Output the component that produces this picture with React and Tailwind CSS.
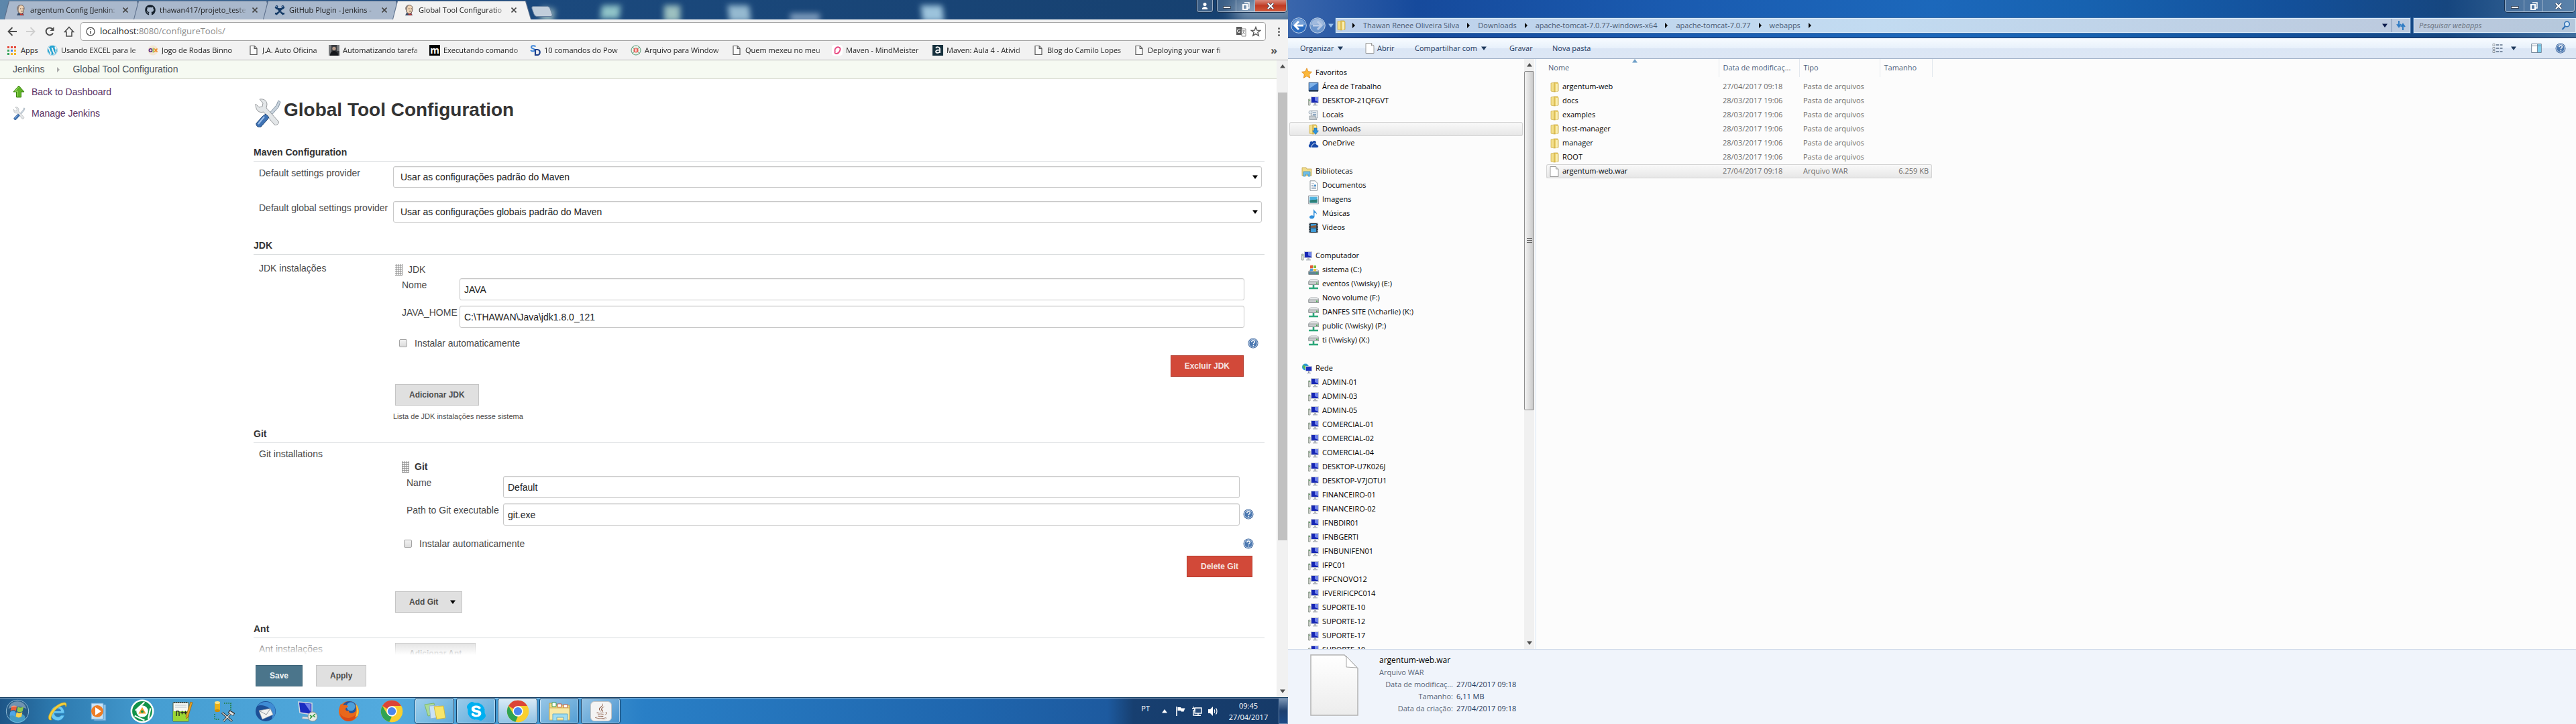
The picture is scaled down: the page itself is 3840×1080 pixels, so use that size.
import { FaGithub, FaWordpress, FaSkype, FaJava } from "react-icons/fa";

/* ---------- small icons ---------- */

const Svg = ({ box = "0 0 16 16", className = "size-4", children }) => (
  <svg viewBox={box} className={"shrink-0 " + className} aria-hidden="true">{children}</svg>
);

const Butler = () => (
  <Svg>
    <path d="M3 7C2 3 5 .6 8 .6c3.600 0 5.500 2.600 4.800 6.200L12 11l-3 3-4-2z" fill="#efd3b5" stroke="#4b3a32" strokeWidth=".8" />
    <path d="M3 7C2 3 5 .6 8 .6 5.500 2 5 4 4.600 8l.4 4c-2-1-2-3-2-5z" fill="#8d8480" />
    <path d="M7 6h1.500M10.500 6H12M8 9.500h3" stroke="#3a2b26" strokeWidth=".9" />
    <path d="M4 12l4 2 3-2 2 4H2z" fill="#394a66" />
    <path d="M7 13l2 1 2.500-1v3L9 15l-2 1z" fill="#c8322c" />
  </Svg>
);

const TwoCats = () => (
  <Svg>
    <circle cx="3.500" cy="3" r="2" fill="#143a66" />
    <circle cx="12.500" cy="3" r="2" fill="#143a66" />
    <path d="M1.500 3.500C4 7.500 12 7.500 14.500 3.500M4 5l6 6.500c1 1.500 3 2 5 1.500M12 5l-6 6.500c-1 1.500-3 2-5 1.500" fill="none" stroke="#143a66" strokeWidth="2.400" />
    <path d="M3 15l2-3M13 15l-2-3" stroke="#143a66" strokeWidth="2" />
    <circle cx="3.500" cy="2.800" r=".8" fill="#8fb4e0" />
    <circle cx="12.500" cy="2.800" r=".8" fill="#8fb4e0" />
  </Svg>
);

const Page = ({ className = "h-4 w-3" }) => (
  <Svg box="0 0 12 16" className={className}>
    <path d="M1 1.500h6.500l3.500 3.700v9.300H1z" fill="#fafafa" stroke="#5a5a5a" strokeWidth="1.200" />
    <path d="M7.200 1.500v4H11" fill="none" stroke="#5a5a5a" strokeWidth="1.200" />
  </Svg>
);

const Tools = ({ className }) => (
  <Svg box="0 0 44 44" className={className}>
    <path d="M39 4l3 2-3 8-14 16-3-3 14-16z" fill="#c9d3dd" stroke="#8494a3" />
    <path d="M5 9l5 5 5-1 1-5-5-6c6-1 11 2 11 8l-1 5 18 20c2 3-3 7-6 5L17 21c-7 2-12-2-12-12z" fill="#e3e6e8" stroke="#96999c" />
    <path d="M20 24l5 5-3 4-9 10c-3 2-8-1-7-5l9-10z" fill="#3f73b5" stroke="#1f4576" />
    <path d="M18 28L9 39" stroke="#9fc0ea" strokeWidth="2" />
  </Svg>
);

const GreenArrow = () => (
  <Svg box="0 0 20 20" className="size-5">
    <path d="M10 1l8 9h-4.500v8h-7v-8H2z" fill="#5fb327" stroke="#3b8211" />
    <path d="M9.500 3L4.500 9H8v8" fill="none" stroke="#a5e06d" />
  </Svg>
);

const Help = () => (
  <button aria-label="Help" className="size-4">
    <Svg>
      <circle cx="8" cy="8" r="7.500" fill="#2d5a97" />
      <circle cx="8" cy="8" r="6.200" fill="#4a77b0" stroke="#dfe9f5" />
      <path d="M5.800 6.200c0-3 4.600-3 4.600-.3 0 1.600-2 1.600-2 3.300M8.400 10.800v1.500" fill="none" stroke="#fff" strokeWidth="1.500" />
    </Svg>
  </button>
);

const Grip = () => (
  <span className="h-[17px] w-[11px] shrink-0 bg-[radial-gradient(#8a8a8a_50%,transparent_60%)] bg-[size:3px_3px]" />
);

const Down = ({ className = "text-black" }) => (
  <Svg box="0 0 8 6" className={"h-1.5 w-2 " + className}><path d="M0 .5h8L4 6z" fill="currentColor" /></Svg>
);
const Up = ({ className = "text-[#505050]" }) => (
  <Svg box="0 0 8 6" className={"h-1.5 w-2 " + className}><path d="M0 5.500h8L4 0z" fill="currentColor" /></Svg>
);
const Right = ({ className = "h-2 w-1 text-black" }) => (
  <Svg box="0 0 4 8" className={className}><path d="M0 0v8l4-4z" fill="currentColor" /></Svg>
);

const Chrome = ({ className = "size-9" }) => (
  <Svg box="0 0 40 40" className={className}>
    <circle cx="20" cy="20" r="18" fill="#f7cf2c" />
    <path d="M20 20L4.400 11A18 18 0 0 1 35.600 11H20z" fill="#dc4437" />
    <path d="M4.400 11l8 13.500 7.600 4L16 37.500A18 18 0 0 1 4.400 11z" fill="#2fa352" />
    <path d="M20 12h16a18 18 0 0 1-19.500 25.600L27 24z" fill="#f9cf2f" />
    <circle cx="20" cy="20" r="8.500" fill="#fff" />
    <circle cx="20" cy="20" r="6.800" fill="#4a86ee" />
  </Svg>
);

/* ---------- browser window ---------- */

const tabs = [
  { title: "argentum Config [Jenkin:", icon: <Butler /> },
  { title: "thawan417/projeto_teste", icon: <FaGithub className="size-4 shrink-0 text-[#15202c]" /> },
  { title: "GitHub Plugin - Jenkins -", icon: <TwoCats /> },
  { title: "Global Tool Configuratio", icon: <Butler />, active: true },
];

const slant = "[clip-path:polygon(7px_0,calc(100%-8px)_0,100%_100%,0_100%)]";

function Tab({ title, icon, active }) {
  return (
    <div className={"relative -mr-3.5 flex h-7 w-[207px] items-center pr-[22px] pl-[17px] " + (active ? "z-10" : "")}>
      <span className={"absolute inset-0 bg-[#5c6f8b] " + slant} />
      <span className={"absolute inset-x-px top-px bottom-0 " + slant + (active ? " bg-[#f2f2f2]" : " bg-[#a9b8cc]")} />
      <button className="relative flex min-w-0 flex-1 items-center gap-1.5 text-left">
        {icon}
        <span className="min-w-0 flex-1 overflow-hidden whitespace-nowrap text-[#1c1c1c] [mask-image:linear-gradient(to_right,black_88%,transparent)]">{title}</span>
      </button>
      <button aria-label="Close tab" className="relative ml-2">
        <Svg box="0 0 8 8" className="size-2"><path d="M.5.5l7 7M7.500.5l-7 7" stroke="#444" strokeWidth="1.600" /></Svg>
      </button>
    </div>
  );
}

function WindowButtons({ red }) {
  return (
    <div className="flex h-[18px] divide-x divide-white/40 overflow-hidden rounded-b border border-t-0 border-white/50 bg-white/15 shadow-[0_0_0_1px_#1b3453]">
      <button aria-label="Minimize" className="flex w-7 items-end justify-center pb-1"><span className="h-1 w-3 border border-[#39485c] bg-white" /></button>
      <button aria-label="Restore" className="flex w-7 items-center justify-center">
        <Svg box="0 0 12 12" className="size-3"><path d="M4 1h7v8h-3" fill="none" stroke="#fff" strokeWidth="1.500" /><path d="M2 4h6v7H2z" fill="none" stroke="#fff" strokeWidth="2" /></Svg>
      </button>
      <button aria-label="Close" className={"flex w-[46px] items-center justify-center " + (red ? "bg-linear-to-b from-[#d98a7c] via-[#c03a22] to-[#d0583a]" : "")}>
        <Svg box="0 0 12 10" className="h-2.5 w-3"><path d="M2 1l8 8M10 1L2 9" stroke="#34455e" strokeWidth="3.600" /><path d="M2 1l8 8M10 1L2 9" stroke="#fff" strokeWidth="2.200" /></Svg>
      </button>
    </div>
  );
}

const DesktopBehind = () => (
  <div className="absolute inset-0 overflow-hidden" aria-hidden="true">
    <span className="absolute top-3 left-[806px] h-5 w-5 rotate-12 bg-[#8fb0b8] blur-xs" />
    <span className="absolute top-2 left-[896px] h-5 w-7 -skew-x-6 bg-[#8fc3c8] blur-xs" />
    <span className="absolute top-2 left-[990px] h-6 w-6 bg-[#9cc0c0] blur-xs" />
    <span className="absolute top-2 left-[1086px] h-6 w-8 skew-x-6 bg-[#95b9d0] blur-xs" />
    <span className="absolute top-5 left-[1178px] h-3 w-11 bg-[#7f9dbd] blur-xs" />
    <span className="absolute top-2 left-[1374px] h-6 w-8 skew-x-6 bg-[#9cc3dc] blur-xs" />
    <span className="absolute top-0 left-[1840px] h-8 w-24 bg-[#7f9ab5] blur-md" />
  </div>
);

const MLogo = () => <span className="flex size-4 shrink-0 items-center justify-center bg-black text-[14px] leading-4 font-bold text-white">m</span>;
const Olx = () => (
  <Svg><circle cx="8" cy="8" r="7.500" fill="#f3e6d4" /><circle cx="4.500" cy="8" r="2.200" fill="none" stroke="#5b2a86" strokeWidth="1.600" /><path d="M8.300 4.500v7" stroke="#8bc34a" strokeWidth="1.400" /><path d="M10 5.500l4.500 5M14.500 5.500l-4.500 5" stroke="#f08a24" strokeWidth="1.700" /></Svg>
);
const Photo = () => (
  <Svg><path d="M0 0h16v16H0z" fill="#3a3c40" /><path d="M0 0h4v16H0zM12 0h4v9h-4z" fill="#77797c" /><circle cx="8" cy="5.500" r="2.700" fill="#b79a88" /><path d="M2 16c0-5 3-7 6-7s6 2 6 7z" fill="#15171b" /></Svg>
);
const Sd = () => (
  <Svg><path d="M8.500 2.500C6 .5 2 1 2 3.400c0 2.600 5 1.600 5 4.200C7 10 3 10 1 8" fill="none" stroke="#3f86d8" strokeWidth="2" /><path d="M8 7h3c5 0 5 8 0 8H8z" fill="none" stroke="#1d3f8b" strokeWidth="2.200" /></Svg>
);
const Red8 = () => (
  <Svg><circle cx="8" cy="8" r="7" fill="#e9f2e9" stroke="#5c9a77" /><path d="M2 3l12 10M14 3L2 13" stroke="#5c9a77" /><circle cx="8" cy="8" r="3.600" fill="#e5564c" /><path d="M7 6v4h1.500c1.500 0 1.500-2 0-2H7h1.300c1.200 0 1.200-2 0-2z" fill="none" stroke="#fff" strokeWidth=".8" /></Svg>
);
const Mind = () => (
  <Svg><rect width="16" height="16" rx="4" fill="#fff" /><path d="M5 11C3 5 8 2 11.500 4 14 6 11 13 7 13c-3 0-3-2-2-3" fill="none" stroke="#e8467f" strokeWidth="1.800" /></Svg>
);
const Alura = () => (
  <Svg><path d="M0 0h16v16H0z" fill="#16303d" /><path d="M5 5c1-3 6-2 6 1v6M11 8c-3-1-6 0-6 2s4 3 6 0" fill="none" stroke="#fff" strokeWidth="1.700" /></Svg>
);
const PageMark = () => <span className="flex w-4 shrink-0 justify-center"><Page /></span>;

const bookmarks = [
  ["Usando EXCEL para le", <FaWordpress className="size-4 shrink-0 text-[#1a9fd0]" />],
  ["Jogo de Rodas Binno", <Olx />],
  ["J.A. Auto Oficina", <PageMark />],
  ["Automatizando tarefa", <Photo />],
  ["Executando comando", <MLogo />],
  ["10 comandos do Pow", <Sd />],
  ["Arquivo para Window", <Red8 />],
  ["Quem mexeu no meu", <PageMark />],
  ["Maven - MindMeister", <Mind />],
  ["Maven: Aula 4 - Ativid", <Alura />],
  ["Blog do Camilo Lopes", <PageMark />],
  ["Deploying your war fi", <PageMark />],
];

function BrowserChrome() {
  return (
    <header className="font-['Open_Sans',sans-serif] text-[11px] text-[#222]">
      <div className="relative flex h-[29px] items-end bg-linear-to-r from-[#5d87ab] via-[#1c4b80] via-30% to-[#16406f]">
        <DesktopBehind />
        <nav className="relative flex pl-1.5" aria-label="Tabs">
          {tabs.map((t) => <Tab key={t.title} {...t} />)}
        </nav>
        <button aria-label="New tab" className="relative mb-1 ml-4 h-4 w-7 skew-x-[20deg] rounded-sm border border-[#66809f] bg-[#c1cedb]" />
        <div className="absolute top-0 right-0.5 flex gap-1.5">
          <button aria-label="Profile" className="flex h-[18px] w-6 items-center justify-center rounded-b border border-t-0 border-white/50 bg-white/15 shadow-[0_0_0_1px_#1b3453]">
            <Svg box="0 0 10 12" className="h-3 w-2.5"><circle cx="5" cy="3.500" r="2.500" fill="#fff" /><path d="M1 11V9l3-2h2l3 2v2z" fill="#fff" /></Svg>
          </button>
          <WindowButtons red />
        </div>
      </div>
      <div className="flex h-9 items-center bg-[#f2f2f2] pr-3 pl-[11px]">
        <div className="flex w-[109px] items-center gap-3.5 text-[#4c4c4c]">
          <button aria-label="Back"><Svg box="0 0 14 14" className="size-3.5"><path d="M14 7H2M7.500 1L1.500 7l6 6" fill="none" stroke="currentColor" strokeWidth="1.900" /></Svg></button>
          <button aria-label="Forward"><Svg box="0 0 14 14" className="size-3.5"><path d="M0 7h12M6.500 1l6 6-6 6" fill="none" stroke="#cfcfcf" strokeWidth="1.900" /></Svg></button>
          <button aria-label="Reload"><Svg box="0 0 14 14" className="size-3.5"><path d="M12 9.500A5.500 5.500 0 1 1 11.500 3.500" fill="none" stroke="currentColor" strokeWidth="2" /><path d="M13.500 0v6h-6z" fill="currentColor" /></Svg></button>
          <button aria-label="Home"><Svg><path d="M8 1.500l6.500 7H12V15H4V8.500H1.500z" fill="none" stroke="currentColor" strokeWidth="1.600" /></Svg></button>
        </div>
        <div className="flex h-7 flex-1 items-center rounded-sm border border-[#a6a6a6] bg-white pr-1.5 pl-[7px]">
          <Svg box="0 0 14 14" className="size-3.5"><circle cx="7" cy="7" r="6" fill="none" stroke="#555" strokeWidth="1.300" /><path d="M7 6v4.500M7 3.300v1.500" stroke="#555" strokeWidth="1.500" /></Svg>
          <div className="flex-1 pl-[7px] text-[13px] text-[#8a8a8a]"><span className="text-[#222]">localhost:</span>8080/configureTools/</div>
          <button aria-label="Translate"><Svg className="size-4"><path d="M1 1h8l3 12H1z" fill="#5a5a5a" /><path d="M9 4h6v11H9z" fill="#fff" stroke="#8a8a8a" /><path d="M7 5.500a2.500 2.500 0 1 0 0 3H5" fill="none" stroke="#fff" /><path d="M10 7h4M12 6v1c0 3-1 4-2 5M11 9l3 3" stroke="#8a8a8a" fill="none" /></Svg></button>
          <button aria-label="Bookmark" className="ml-1.5"><Svg><path d="M8 1.500l1.800 4.600 4.900.3-3.800 3.100 1.300 4.800L8 11.600l-4.200 2.700 1.300-4.800L1.300 6.400l4.900-.3z" fill="none" stroke="#555" strokeWidth="1.400" /></Svg></button>
        </div>
        <button aria-label="Menu" className="ml-[18px] flex flex-col gap-0.5">
          <span className="size-[3px] rounded-full bg-[#5a5a5a]" /><span className="size-[3px] rounded-full bg-[#5a5a5a]" /><span className="size-[3px] rounded-full bg-[#5a5a5a]" />
        </button>
      </div>
      <div className="flex h-[25px] items-center border-b border-[#b4b4b4] bg-[#f2f2f2] pr-4 pb-1 pl-[11px]">
        <button className="flex w-[59px] items-center gap-[7px]">
          <span className="grid grid-cols-3 gap-0.5">
            {["bg-[#e5473a]", "bg-[#e5473a]", "bg-[#e5473a]", "bg-[#35a35a]", "bg-[#3f82e8]", "bg-[#f0b429]", "bg-[#35a35a]", "bg-[#f0b429]", "bg-[#f0b429]"].map((c, i) => <span key={i} className={"size-[3px] " + c} />)}
          </span>
          Apps
        </button>
        {bookmarks.map(([label, icon]) => (
          <a key={label} href="#" className={"flex shrink-0 items-center gap-[5px] pr-2.5 " + (label.startsWith("J.A.") ? "w-[120px]" : "w-[150px]")}>
            {icon}
            <span className="flex-1 overflow-hidden whitespace-nowrap [mask-image:linear-gradient(to_right,black_88%,transparent)]">{label}</span>
          </a>
        ))}
        <button className="ml-auto text-base leading-4 font-bold text-[#555]">»</button>
      </div>
    </header>
  );
}

/* ---------- Jenkins page ---------- */

const tones = {
  gray: "border-[#c5c5c5] bg-[#e0e0e0] text-[#4d4d4d]",
  red: "border-[#b33a2c] bg-[#d24939] text-[#f5e4e2]",
  blue: "border-[#3f6579] bg-[#4b758b] text-[#eef3f6]",
};
const Button = ({ tone = "gray", className = "", children }) => (
  <button className={"flex h-8 items-center border px-5 text-xs font-bold " + tones[tone] + " " + className}>{children}</button>
);

const Section = ({ title, className, children }) => (
  <section className={className}>
    <h2 className="border-b border-[#d9dcde] pb-[3px] leading-5 font-bold text-[#333]">{title}</h2>
    {children}
  </section>
);

const fieldBox = "w-full rounded-[3px] border border-[#c8c8c8] bg-white text-[#222] shadow-[inset_0_1px_1px_rgba(0,0,0,0.07)]";

const SelectRow = ({ id, label, value }) => (
  <div className="grid grid-cols-[208px_1fr] pr-1">
    <label htmlFor={id} className="pl-2 leading-5 whitespace-nowrap">{label}</label>
    <div className="relative">
      <select id={id} defaultValue={value} className={fieldBox + " h-8 appearance-none px-2.5"}><option>{value}</option></select>
      <span className="pointer-events-none absolute top-[13px] right-1.5"><Down /></span>
    </div>
  </div>
);

const Field = ({ id, label, value, cols, pad, help }) => (
  <div className={"grid " + cols}>
    <label htmlFor={id} className={"leading-5 whitespace-nowrap " + pad}>{label}</label>
    <input id={id} defaultValue={value} className={fieldBox + " h-[33px] px-1.5"} />
    <span className="self-center pt-1 pl-[5px]">{help && <Help />}</span>
  </div>
);

const Check = ({ id, className }) => (
  <div className={"flex h-5 items-center justify-between " + className}>
    <span className="flex items-center gap-[11px]">
      <input id={id} type="checkbox" className="size-3 appearance-none rounded-xs border border-[#a3a3a3] bg-linear-to-b from-[#f2f2f2] to-[#dcdcdc]" />
      <label htmlFor={id}>Instalar automaticamente</label>
    </span>
    <Help />
  </div>
);

const Scrollbar = () => (
  <div className="flex w-[17px] shrink-0 flex-col items-center bg-[#f1f1f1] py-1.5">
    <Up />
    <div className="mt-9 flex w-3.5 flex-1 flex-col"><div className="h-3/4 bg-[#c1c1c1]" /></div>
    <Down className="text-[#505050]" />
  </div>
);

function JenkinsPage() {
  return (
    <div className="flex min-h-0 flex-1 bg-white font-['Liberation_Sans',Arial,sans-serif] text-[14px] text-[#4a4a4a]">
      <div className="relative flex min-w-0 flex-1 flex-col overflow-hidden">
        <nav className="flex h-7 items-center border-b border-[#d5d7cd] bg-[#f6faf2] pl-[19px] text-[#4d545d]" aria-label="Breadcrumb">
          <a href="#">Jenkins</a>
          <Right className="mx-[19px] h-2 w-1 text-[#aaa]" />
          <a href="#">Global Tool Configuration</a>
        </nav>
        <div className="flex min-h-0 flex-1">
          <aside className="w-[378px] shrink-0 pt-[3px] pl-[18px] text-[#5c3566]">
            <a href="#" className="flex h-8 items-center gap-[9px]"><GreenArrow />Back to Dashboard</a>
            <a href="#" className="flex h-8 items-center gap-[9px]"><Tools className="size-5" />Manage Jenkins</a>
          </aside>
          <main className="min-w-0 flex-1 pt-7 pr-[18px]">
            <div className="flex h-11">
              <Tools className="-ml-0.5 size-11" />
              <h1 className="pl-[3px] text-[28px] leading-9 font-bold text-[#333]">Global Tool Configuration</h1>
            </div>

            <Section title="Maven Configuration" className="mt-[27px]">
              <div className="flex flex-col gap-5 pt-[7px]">
                <SelectRow id="settings" label="Default settings provider" value="Usar as configurações padrão do Maven" />
                <SelectRow id="global" label="Default global settings provider" value="Usar as configurações globais padrão do Maven" />
              </div>
            </Section>

            <Section title="JDK" className="mt-6">
              <div className="grid grid-cols-[208px_1fr] pt-2.5 pr-1">
                <div className="pl-2 leading-5">JDK instalações</div>
                <div className="pt-0.5">
                  <div className="flex h-5 items-center gap-2 pl-[3px]"><Grip />JDK</div>
                  <div className="flex flex-col gap-2 pt-[3px]">
                    <Field id="jdk-name" label="Nome" value="JAVA" cols="grid-cols-[99px_1fr_26px]" pad="pl-[13px]" />
                    <Field id="jdk-home" label="JAVA_HOME" value="C:\THAWAN\Java\jdk1.8.0_121" cols="grid-cols-[99px_1fr_26px]" pad="pl-[13px]" />
                  </div>
                  <Check id="jdk-auto" className="mt-[13px] pr-[5px] pl-[9px]" />
                  <div className="mt-2 flex justify-end pr-[27px]"><Button tone="red">Excluir JDK</Button></div>
                  <Button className="mt-[11px] ml-[3px]">Adicionar JDK</Button>
                  <p className="mt-1.5 text-[11px] leading-5">Lista de JDK instalações nesse sistema</p>
                </div>
              </div>
            </Section>

            <Section title="Git" className="mt-1.5">
              <div className="grid grid-cols-[208px_1fr] pt-1.5 pr-1">
                <div className="pl-2 leading-5">Git installations</div>
                <div className="pt-[19px]">
                  <div className="flex h-5 items-center gap-2 pl-[13px] font-bold text-[#333]"><Grip />Git</div>
                  <div className="flex flex-col gap-2 pt-1">
                    <Field id="git-name" label="Name" value="Default" cols="grid-cols-[164px_1fr_33px]" pad="pl-5" />
                    <Field id="git-path" label="Path to Git executable" value="git.exe" cols="grid-cols-[164px_1fr_33px]" pad="pl-5" help />
                  </div>
                  <Check id="git-auto" className="mt-[17px] pr-3 pl-4" />
                  <div className="mt-2 flex justify-end pr-3.5"><Button tone="red">Delete Git</Button></div>
                  <Button className="mt-[21px] ml-[3px] gap-[18px] pr-[9px]">Add Git <Down /></Button>
                </div>
              </div>
            </Section>

            <Section title="Ant" className="mt-3.5">
              <div className="grid grid-cols-[208px_1fr] pt-1.5 pr-1">
                <div className="pl-2 leading-5">Ant instalações</div>
                <Button className="mt-px ml-[3px] justify-self-start">Adicionar Ant</Button>
              </div>
            </Section>
          </main>
        </div>
        <div className="absolute right-0 bottom-0 left-[378px]">
          <div className="h-5 bg-linear-to-b from-white/0 to-white" />
          <div className="flex h-[63px] gap-5 bg-white pt-[15px] pl-[3px]">
            <Button tone="blue">Save</Button>
            <Button>Apply</Button>
          </div>
        </div>
      </div>
      <Scrollbar />
    </div>
  );
}

/* ---------- taskbar ---------- */

const StartOrb = () => (
  <Svg box="0 0 40 40" className="size-9">
    <circle cx="20" cy="20" r="18.500" fill="#245a86" stroke="#9cc4dd" />
    <ellipse cx="20" cy="31" rx="13" ry="8" fill="#5cc6ef" opacity=".6" />
    <path d="M10 12c3-2 6-2 9 0l-1.500 7.500c-3-2-6-2-9 0z" fill="#e8603a" />
    <path d="M20.500 12.500c3 2 6 2 9.500 0l-1.500 7.500c-3 2-6 2-9.500 0z" fill="#8fc94a" />
    <path d="M8.200 21c3-2 6-2 9 0l-1.500 7.500c-3-2-6-2-9 0z" fill="#4fa6e6" />
    <path d="M18.700 21.500c3 2 6 2 9.500 0L26.700 29c-3 2-6 2-9.500 0z" fill="#fbd24a" />
    <path d="M5 16C7 7 13 3.500 20 3.500S33 7 35 16c-8-5-22-5-30 0z" fill="#fff" opacity=".35" />
  </Svg>
);
const Ie = () => (
  <Svg box="0 0 32 32" className="size-8">
    <path d="M26 19H11c0 6 8 7 10 3h5c-2 6-6 8-10 8-15-1-13-22 0-22 7 0 10 5 10 11z" fill="#6cc8f3" stroke="#2b8dcd" />
    <path d="M11 16h10c0-5-9-6-10 0z" fill="#2f7dbd" />
    <path d="M4 29C-3 24 14 2 27 3c3 1 2 5 1 7 0-3-1-4-4-3C14 9 3 24 7 29z" fill="#f3cf3c" stroke="#c59a17" strokeWidth=".6" />
  </Svg>
);
const Wmp = () => (
  <Svg box="0 0 32 32" className="size-8"><path d="M8 6h18v24H8z" fill="#8dc4ea" stroke="#4b8fc5" /><path d="M4 4h18v24H4z" fill="#c9e3f6" stroke="#5c9fd2" /><circle cx="13" cy="16" r="9" fill="#ee7d26" /><path d="M10 10v12l9-6z" fill="#fff" /></Svg>
);
const Swirl = () => (
  <Svg box="0 0 32 32" className="size-9">
    <circle cx="16" cy="16" r="15.500" fill="#fff" />
    <circle cx="16" cy="16" r="10.500" fill="none" stroke="#12934a" strokeWidth="5.500" />
    <path d="M7 15L19 4M27 12l-3 14M6 22l13 6" stroke="#fff" strokeWidth="2" />
    <circle cx="16" cy="16" r="5.500" fill="#fff" />
    <path d="M16 10.500l5 8.500H11z" fill="#f3a02a" />
    <circle cx="16" cy="16.500" r="1.800" fill="#12934a" />
  </Svg>
);
const Npp = () => (
  <Svg box="0 0 32 32" className="size-8"><path d="M2 3h23v28H2z" fill="#f5f7f2" stroke="#4b5a3a" /><path d="M2 16h23v15H2z" fill="#9bd634" /><path d="M3 3h21" stroke="#333" strokeWidth="2" strokeDasharray="1.500 1.500" /><path d="M5 7h17M5 10h17" stroke="#b9c4c9" /><path d="M7 23v-7c3-1 4 0 4 2v5M13 18h5M15.500 15.500v5M18 18h5M20.500 15.500v5" stroke="#222" fill="none" strokeWidth="1.400" /><path d="M28 2l3 1-7 22-2 2-1-3z" fill="#e7a325" stroke="#8b5b10" strokeWidth=".7" /></Svg>
);
const Sql = () => (
  <Svg box="0 0 32 32" className="size-8"><path d="M2 3h8v12H2z" fill="#e9b21a" /><ellipse cx="6" cy="3" rx="4" ry="2" fill="#fbe384" /><ellipse cx="6" cy="15" rx="4" ry="2" fill="#c68e0c" /><path d="M16 4h10v10M2 20v8h8" fill="none" stroke="#1d7a2b" strokeWidth="1.600" strokeDasharray="1.600 1.600" /><path d="M13 18l15 13M28 17L15 31" stroke="#222" strokeWidth="3" /><path d="M13 18l15 13M27 18L15 31" stroke="#d9d9d9" strokeWidth="1.600" /><path d="M23 16l8 5" stroke="#333" strokeWidth="5" /><path d="M24 17l6 4" stroke="#e6e6e6" strokeWidth="3" /></Svg>
);
const Bird = () => (
  <Svg box="0 0 32 32" className="size-8"><circle cx="16" cy="16" r="15" fill="#1d4f96" /><path d="M4 8C10 0 24 0 29 9c3 8 1 15-4 20 2-8 2-14-4-18S8 6 4 8z" fill="#3f8cd4" /><path d="M6 15l17-3 4 9-16 7z" fill="#f3f3f0" stroke="#98a0a8" strokeWidth=".7" /><path d="M6 15l11 6 6-9" fill="none" stroke="#8d959c" /></Svg>
);
const Rdp = () => (
  <Svg box="0 0 32 32" className="size-8"><path d="M3 2l20 2v17L5 18z" fill="#1a2cc0" stroke="#d5d9e0" strokeWidth="1.500" /><path d="M12 4l9 1v12z" fill="#7080e8" /><path d="M9 24l14 1-3 3-12-1z" fill="#dfe2e6" stroke="#8f959c" strokeWidth=".6" /><circle cx="24" cy="24" r="7" fill="#e8ece8" stroke="#8b918b" /><path d="M20 22l3 2-3 3M28 20l-3 2.500 3 2.500" fill="none" stroke="#2d9a3c" strokeWidth="1.600" /></Svg>
);
const Firefox = () => (
  <Svg box="0 0 32 32" className="size-8">
    <circle cx="16" cy="16" r="15" fill="#e8671b" />
    <circle cx="17" cy="12" r="11" fill="#23549e" />
    <circle cx="19" cy="9" r="6.500" fill="#4da0dc" />
    <path d="M4 5c2 1 3 2 5 2 3-1 5 0 6 2l-4 3c0 3 2 4 5 3-1 4 5 6 10 1 1-3 1-6 0-9 4 4 5 10 3 14-5 9-17 11-24 4C0 20 1 11 4 5z" fill="#e8671b" />
    <path d="M3 19c4 9 18 10 26-1-2 14-18 17-24 7-1-2-2-4-2-6z" fill="#d94a18" />
    <path d="M26 5c5 5 6 13 3 18l-4 2c4-6 3-14 1-20z" fill="#f9c13a" />
  </Svg>
);
const Notes = () => (
  <Svg box="0 0 34 32" className="h-8 w-9"><path d="M2 6l14-2 3 17-12 2z" fill="#a9db9a" stroke="#7eb66f" /><path d="M9 8l14-1 1 18-13 2z" fill="#c9e2f4" stroke="#8fb6d6" /><path d="M16 9l14-1 3 18-13 2z" fill="#f8e66b" stroke="#d0b93d" /></Svg>
);
const Folders = () => (
  <Svg box="0 0 34 32" className="h-8 w-9"><path d="M2 4h8l2 3h20v21H2z" fill="#f2da84" stroke="#c5a245" /><path d="M6 3h6v6H6z" fill="#fff" stroke="#3a9d4c" /><path d="M14 5h6v5h-6zM23 6h6v5h-6z" fill="#fff" stroke="#c4543a" /><path d="M2 11h30v18H2z" fill="#f8e9a7" stroke="#cdae57" /><path d="M7 30V20h22v10h-6v-5H13v5z" fill="#9fdcf1" stroke="#5eaacb" /></Svg>
);

const pinned = [
  ["Start", <StartOrb />], ["Internet Explorer", <Ie />], ["Media Player", <Wmp />], ["Sync", <Swirl />], ["Notepad++", <Npp />],
  ["SQL tools", <Sql />], ["Thunderbird", <Bird />], ["Remote desktop", <Rdp />], ["Firefox", <Firefox />], ["Chrome", <Chrome />],
];
const running = [
  ["Sticky notes", <Notes />],
  ["Skype", <FaSkype className="size-8 rounded-full bg-[radial-gradient(white_55%,transparent_56%)] text-[#00aff0]" />],
  ["Chrome window", <Chrome />],
  ["Explorer", <Folders />],
  ["Java", <span className="flex h-[30px] w-8 items-center justify-center rounded-md border border-[#c3c3c3] bg-[#f4f4f4]"><FaJava className="size-6 text-[#8a5a44]" /></span>],
];

function Taskbar() {
  return (
    <footer className="flex h-10 shrink-0 items-stretch border-t border-[#173f63] bg-[linear-gradient(to_right,#1d5587_0%,#2c78ad_4%,#469ed2_12%,#52aade_30%,#3f93cf_45%,#297fc6_50%,#1f66ae_75%,#1d5a9f_86%,#173f70_88%,#163a68_100%)] font-['Open_Sans',sans-serif] text-white shadow-[inset_0_1px_0_rgba(255,255,255,0.45)]">
      <div className="flex w-[616px]">
        {pinned.map(([name, icon]) => (
          <button key={name} aria-label={name} className="flex w-[62px] shrink-0 items-center pl-2">{icon}</button>
        ))}
      </div>
      <div className="flex gap-[3px] pl-0.5">
        {running.map(([name, icon]) => (
          <button key={name} aria-label={name} className={"flex w-[59px] items-center justify-center rounded-sm border border-[#123f66] shadow-[inset_0_0_0_1px_rgba(255,255,255,0.5)] " + (name === "Chrome window" ? "bg-linear-to-b from-white/80 to-white/40" : "bg-linear-to-br from-white/45 to-white/10")}>{icon}</button>
        ))}
      </div>
      <div className="ml-auto flex items-center">
        <span className="pb-1.5 text-[11px]">PT</span>
        <Up className="mr-3 ml-[18px] text-white" />
        <Svg className="mr-2 size-4"><path d="M2 1v14" stroke="#fff" strokeWidth="1.600" /><path d="M3.500 2H8l1 1.500h5.500l-2 5H9L8 7H3.500z" fill="#fff" /></Svg>
        <Svg className="mr-2 size-4"><path d="M5 3h10v8H5z" fill="#274b78" stroke="#fff" strokeWidth="1.400" /><path d="M10 11v3M6 14.300h8M3 1v3M1 4h4v3H3v7h4" fill="none" stroke="#fff" strokeWidth="1.400" /></Svg>
        <Svg className="size-4"><path d="M1 5h3l4-4v14l-4-4H1z" fill="#fff" /><path d="M10 5.500c1 1 1 4 0 5M12.500 3.500c2 2 2 7 0 9" fill="none" stroke="#fff" strokeWidth="1.200" /></Svg>
        <time className="w-[90px] text-center text-[11px] leading-[17px]">09:45<br />27/04/2017</time>
        <button aria-label="Show desktop" className="h-full w-3.5 border border-[#6d8bb0] bg-linear-to-b from-[#7e98b6] via-[#1d3f6f] to-[#1c4a86]" />
      </div>
    </footer>
  );
}

/* ---------- explorer window ---------- */

const Folder = ({ arrow }) => (
  <Svg><path d="M2 2l5-1v14l-5-1z" fill="#f4e08c" stroke="#c9ab45" strokeWidth=".7" /><path d="M7 1h5l1 2v11l-6 1z" fill="#ecd068" stroke="#c3a23b" strokeWidth=".7" /><path d="M9 3h3v11l-3 1z" fill="#f9eeb5" />{arrow && <path d="M9 6h4v4h2.500l-4.500 5.500L6.500 10H9z" fill="#2d93dd" stroke="#1768a8" strokeWidth=".6" />}</Svg>
);
const Blank = ({ className = "h-4 w-3.5" }) => (
  <Svg box="0 0 14 16" className={className}><path d="M1 .5h8.500L13 4v11.500H1z" fill="#fff" stroke="#909090" strokeWidth=".9" /><path d="M9.500.5V4H13" fill="#eee" stroke="#909090" strokeWidth=".9" /></Svg>
);
const Pc = () => (
  <Svg><path d="M4 1h12v10H4z" fill="#c8ccd6" /><path d="M5 2h10v8H5z" fill="#1626b4" /><path d="M10 2h5v7l-5-2z" fill="#6f82ea" /><path d="M9 11h3v2h2v1.500H7V13h2z" fill="#b5b9bf" /><path d="M.5 5h2.500v9H.5z" fill="#dcdfda" stroke="#7d877b" strokeWidth=".7" /><path d="M1 6.500h1.500" stroke="#3a9a40" /></Svg>
);
const Net = () => (
  <Svg><circle cx="6" cy="5.500" r="5" fill="#2f9bd2" /><path d="M2 3c3-1 3 2 5 1s1 4-1 4-4-2-4-5z" fill="#55b955" /><path d="M6 4h10v8H6z" fill="#c3c8da" /><path d="M7 5h8v6H7z" fill="#1c2fc0" /><path d="M10 12h2v2h2v1H8v-1h2z" fill="#8f96a8" /></Svg>
);
const Drive = ({ net, win }) => (
  <Svg>
    {net && <path d="M1 14h14M8 9v5" stroke="#2ca77a" strokeWidth="2.600" />}
    <path d={net ? "M1 3l3-2h9l3 2v5H1z" : "M1 9l3-2h9l3 2v5H1z"} fill="#eceeef" stroke="#8b8f92" strokeWidth=".7" />
    <path d={net ? "M.8 4h15v4.500H.8z" : "M.8 10h15v4.500H.8z"} fill={win ? "#5d8797" : "#c8cccd"} stroke="#7b7f82" strokeWidth=".7" />
    <path d={net ? "M12 5.500h2v1.800h-2z" : "M12 11.500h2v1.800h-2z"} fill="#3fae47" />
    {win && <><path d="M3 1l4-.5V5l-4 .5z" fill="#e05a35" /><path d="M8 1h4v4H8z" fill="#7dbb3c" /><path d="M3 6l4-.5V9L3 9.500z" fill="#4a9be0" /><path d="M8 6h4v3.500H8z" fill="#f4c53b" /></>}
  </Svg>
);
const Star = () => <Svg><path d="M8 .8l2.200 4.900 5.300.6-3.900 3.600 1 5.300L8 12.600l-4.600 2.600 1-5.300L.5 6.300l5.300-.6z" fill="#fbb83a" stroke="#dd8414" strokeWidth=".8" /></Svg>;
const Desk = () => <Svg><path d="M1 1h14v13H1z" fill="#3a78c6" stroke="#5f6e80" strokeWidth=".8" /><path d="M2 2h12l-12 8z" fill="#7fb2e8" /><path d="M1 12h14v2.500H1z" fill="#233a58" /></Svg>;
const Places = () => <Svg><path d="M5 1h9v11H5z" fill="#e5ebf0" stroke="#8a97a3" strokeWidth=".8" /><path d="M7 4h5M7 6.500h5M7 9h5" stroke="#6f8faf" /><path d="M2 9h8l3 5.500H2z" fill="#c8ced3" stroke="#85909a" strokeWidth=".7" /><circle cx="3.500" cy="3.500" r="2.500" fill="#dfe8ee" stroke="#94a1ad" strokeWidth=".8" /></Svg>;
const Cloud = () => <Svg><path d="M8 14H3.500c-3 0-3.500-4-1-5C2 5 5 4 6.500 5.500 9 3 12 4 12 7z" fill="#1648a8" /><path d="M7 14.500c-3 0-3-4 0-4.500 0-3 5-4 6 0 3.500 0 3.500 4.500 0 4.500z" fill="#1648a8" stroke="#fcfcfc" strokeWidth=".9" /></Svg>;
const Libs = () => <Svg><path d="M1 2h6l1 2h7v10H1z" fill="#f1dc8b" stroke="#c3a34a" strokeWidth=".8" /><path d="M3 15V8h10v7h-3v-3H6v3z" fill="#72bfe8" stroke="#3a8fc0" strokeWidth=".8" /></Svg>;
const Doc = () => <Svg><path d="M3 .8h7.500L13.500 4v11.200H3z" fill="#fff" stroke="#7f8890" strokeWidth=".9" /><path d="M5 5h4M5 7.500h3M5 10h7M5 12.500h7" stroke="#8fa3b8" /><path d="M9 6.500h3v2.500H9z" fill="#4b95cf" /></Svg>;
const Pic = () => <Svg><path d="M.6 2h15v12H.6z" fill="#fff" stroke="#8a9097" strokeWidth=".9" /><path d="M2.200 3.600h11.600v9H2.200z" fill="#4fb3e0" /><path d="M2.200 9c4-2 8 0 11.600-2v5.600H2.200z" fill="#2c7f76" /></Svg>;
const Music = () => <Svg><path d="M8 .5c1 3.500 5 4 5 8.500-1-2-2.500-2.500-3.500-2.500V12c0 4-7.500 4.500-7.500 1 0-2.600 3.500-3.500 6-2z" fill="#2f8fdb" /></Svg>;
const Film = () => <Svg><path d="M1 .8h14v14.400H1z" fill="#2c3a44" /><path d="M4 2h8v5.500H4zM4 8.500h8V14H4z" fill="#3d9bd8" /><path d="M4 5l8-1v3.500H4z" fill="#8a5a3a" /><path d="M2.500 1v14M13.500 1v14" stroke="#dfe3e6" strokeWidth="1.200" strokeDasharray="1.200 1.300" /></Svg>;

const tree = [
  ["Favoritos", <Star />, [["Área de Trabalho", <Desk />], ["DESKTOP-21QFGVT", <Pc />], ["Locais", <Places />], ["Downloads", <Folder arrow />], ["OneDrive", <Cloud />]]],
  ["Bibliotecas", <Libs />, [["Documentos", <Doc />], ["Imagens", <Pic />], ["Músicas", <Music />], ["Vídeos", <Film />]]],
  ["Computador", <Pc />, [["sistema (C:)", <Drive win />], ["eventos (\\\\wisky) (E:)", <Drive net />], ["Novo volume (F:)", <Drive />], ["DANFES SITE (\\\\charlie) (K:)", <Drive net />], ["public (\\\\wisky) (P:)", <Drive net />], ["ti (\\\\wisky) (X:)", <Drive net />]]],
  ["Rede", <Net />, ["ADMIN-01", "ADMIN-03", "ADMIN-05", "COMERCIAL-01", "COMERCIAL-02", "COMERCIAL-04", "DESKTOP-U7K026J", "DESKTOP-V7JOTU1", "FINANCEIRO-01", "FINANCEIRO-02", "IFNBDIR01", "IFNBGERTI", "IFNBUNIFEN01", "IFPC01", "IFPCNOVO12", "IFVERIFICPC014", "SUPORTE-10", "SUPORTE-12", "SUPORTE-17", "SUPORTE-19"].map((n) => [n, <Pc />])],
];

const files = [
  ["argentum-web", "27/04/2017 09:18", "Pasta de arquivos", ""],
  ["docs", "28/03/2017 19:06", "Pasta de arquivos", ""],
  ["examples", "28/03/2017 19:06", "Pasta de arquivos", ""],
  ["host-manager", "28/03/2017 19:06", "Pasta de arquivos", ""],
  ["manager", "28/03/2017 19:06", "Pasta de arquivos", ""],
  ["ROOT", "28/03/2017 19:06", "Pasta de arquivos", ""],
  ["argentum-web.war", "27/04/2017 09:18", "Arquivo WAR", "6.259 KB"],
];

const crumbs = ["Thawan Renee Oliveira Silva", "Downloads", "apache-tomcat-7.0.77-windows-x64", "apache-tomcat-7.0.77", "webapps"];

const picked = "rounded-[3px] shadow-[inset_0_0_0_1px_#d4d4d4] bg-linear-to-b from-[#fafafa] to-[#e6e6e6]";

const Orb = ({ label, d, dim }) => (
  <button aria-label={label}>
    <Svg box="0 0 24 24" className="size-6">
      <circle cx="12" cy="12" r="11.300" fill={dim ? "#6d96cc" : "#2b6cc0"} stroke="#c3d3e8" />
      <path d="M2 12a10 10 0 0 1 20 0c-6-3-14-3-20 0z" fill="#fff" opacity=".35" />
      <path d={d} fill="none" stroke={dim ? "#b9cbe6" : "#fff"} strokeWidth="3" />
    </Svg>
  </button>
);

function ExplorerTop() {
  return (
    <header>
      <div className="flex h-[57px] flex-col border-b border-[#1b2f57] bg-[linear-gradient(to_right,#3a66ac_0%,#164a9c_10%,#1a5bb0_30%,#1c68bb_50%,#1762b0_62%,#13509a_78%,#16467f_90%,#3f6d9c_100%)]">
        <div className="flex h-[27px] items-start justify-end pr-0.5"><WindowButtons /></div>
        <div className="flex h-[22px] items-center gap-[5px]">
          <div className="flex w-[66px] items-center gap-1 pl-1">
            <Orb label="Back" d="M19 12H7M12 6l-6 6 6 6" />
            <Orb label="Forward" dim d="M5 12h12M12 6l6 6-6 6" />
            <Down className="text-[#9cc4ee]" />
          </div>
          <div className="flex h-[22px] min-w-0 flex-1 items-center border border-[#dcebf8] bg-linear-to-r from-[#bdd0ea] via-[#c2dbf1] to-[#bccade] text-[#4c5b72] shadow-[0_0_0_1px_#3d6ea6]">
            <Folder />
            <nav aria-label="Path" className="flex flex-1 items-center gap-3 pl-2">
              <Right />
              {crumbs.map((c) => (
                <span key={c} className="flex items-center gap-3"><a href="#">{c}</a><Right /></span>
              ))}
            </nav>
            <button aria-label="Previous locations" className="pr-1.5"><Down className="text-[#0a1a4a]" /></button>
            <button aria-label="Refresh" className="flex h-full items-center border-l border-[#7a92b0] px-[5px]">
              <Svg><path d="M5 1v8M2 6l3 4 3-4M11 15V7M8 10l3-4 3 4" fill="none" stroke="#2f7cc4" strokeWidth="2" /></Svg>
            </button>
          </div>
          <div className="flex h-[22px] w-[242px] items-center border border-[#dcebf8] bg-linear-to-r from-[#bccade] to-[#b5c8dc] px-[7px] shadow-[0_0_0_1px_#3d6ea6]">
            <input aria-label="Pesquisar webapps" placeholder="Pesquisar webapps" className="min-w-0 flex-1 italic placeholder:text-[#6c7480]" />
            <Svg box="0 0 14 14" className="size-3.5"><circle cx="8.500" cy="5" r="3.800" fill="#d5e8f7" stroke="#2f71b5" strokeWidth="1.600" /><path d="M6 8l-4.500 5" stroke="#2f71b5" strokeWidth="2.200" /></Svg>
          </div>
        </div>
      </div>
      <div className="flex h-[31px] items-center border-b border-[#a0b0c6] bg-[linear-gradient(to_bottom,#f7fbff_0%,#e8f1fb_48%,#dbe6f5_52%,#dde7f5_100%)] pr-[15px] pl-[18px] text-[#1e395b]">
        <button className="flex w-[97px] items-center gap-1.5">Organizar <Down className="text-[#1e395b]" /></button>
        <button className="flex w-[74px] items-center gap-1"><Blank />Abrir</button>
        <button className="flex w-[141px] items-center gap-1.5">Compartilhar com <Down className="text-[#1e395b]" /></button>
        <button className="w-16 text-left">Gravar</button>
        <button>Nova pasta</button>
        <div className="ml-auto flex items-center">
          <button aria-label="View" className="flex items-center gap-3">
            <Svg><path d="M1 1.500h3v3H1zM1 6.500h3v3H1zM1 11.500h3v3H1z" fill="#fff" stroke="#7f8a96" strokeWidth=".9" /><path d="M6 3h10M6 8h10M6 13h10" stroke="#5b6f86" strokeWidth="1.300" strokeDasharray="4 1.500" /></Svg>
            <Down className="text-[#1e395b]" />
          </button>
          <button aria-label="Preview pane" className="ml-[22px]"><Svg><path d="M.7 1.500h14.600v13H.7z" fill="#fff" stroke="#6f8398" /><path d="M10 2h5v12h-5z" fill="#7fd0ee" /><path d="M1 4.500h14M9.500 2v12" stroke="#6f8398" strokeWidth=".9" /></Svg></button>
          <span className="ml-5 flex"><Help /></span>
        </div>
      </div>
    </header>
  );
}

function Explorer() {
  return (
    <div className="flex min-h-0 min-w-0 flex-col bg-[#fcfcfc] font-['Open_Sans',sans-serif] text-[11px] text-black">
      <ExplorerTop />
      <div className="flex min-h-0 flex-1">
        <nav aria-label="Folders" className="flex w-[352px] shrink-0 flex-col gap-[21px] overflow-hidden px-0.5 pt-2.5">
          {tree.map(([name, icon, items]) => (
            <div key={name}>
              <a href="#" className="flex h-[21px] items-center gap-[5px] pl-[18px]">{icon}{name}</a>
              {items.map(([n, ic]) => (
                <a key={n} href="#" className={"flex h-[21px] items-center gap-[5px] pl-7 " + (n === "Downloads" ? picked : "")}>{ic}{n}</a>
              ))}
            </div>
          ))}
        </nav>
        <div className="flex w-[15px] shrink-0 flex-col items-center bg-[#f0f0f0]">
          <span className="flex h-[18px] items-center"><Up /></span>
          <div className="flex w-full flex-1 flex-col">
            <div className="flex h-3/5 w-full items-center justify-center rounded-xs border border-[#8e8e8e] bg-linear-to-r from-[#f3f3f3] to-[#c9c9c9]">
              <span className="h-2 w-2 bg-[repeating-linear-gradient(to_bottom,#555_0,#555_1px,transparent_1px,transparent_3px)]" />
            </div>
          </div>
          <span className="flex h-[18px] items-center"><Down className="text-[#505050]" /></span>
        </div>
        <div className="ml-0.5 flex-1 border-l border-[#d6e5f5] pl-[15px]">
          <table className="w-[575px] table-fixed border-collapse text-left">
            <thead className="text-[#4c607a]">
              <tr className="h-[27px]">
                <th className="relative w-[257px] border-r border-[#e3e8ee] pl-[3px] font-normal">
                  Nome
                  <Up className="absolute top-0 left-1/2 text-[#6f9fc8]" />
                </th>
                <th className="w-[120px] border-r border-[#e3e8ee] pl-1.5 font-normal">Data de modificaç...</th>
                <th className="w-[120px] border-r border-[#e3e8ee] pl-1.5 font-normal">Tipo</th>
                <th className="w-[78px] border-r border-[#e3e8ee] pl-1.5 font-normal">Tamanho</th>
              </tr>
            </thead>
            <tbody className="text-[#6d6d6d]">
              <tr className="h-1" aria-hidden="true"><td colSpan={4} /></tr>
              {files.map(([name, date, type, size]) => (
                <tr key={name} className={"h-[21px] " + (size ? picked : "")}>
                  <td className="p-0 pl-[5px] text-black"><span className="flex items-center gap-[3px]">{size ? <span className="flex w-4 justify-start"><Blank /></span> : <Folder />}{name}</span></td>
                  <td className="p-0 pl-1.5">{date}</td>
                  <td className="p-0 pl-1.5">{type}</td>
                  <td className="p-0 pr-[5px] text-right">{size}</td>
                </tr>
              ))}
            </tbody>
          </table>
        </div>
      </div>
      <footer className="flex h-28 shrink-0 border-t border-[#c8d4e6] bg-[#f0f4fb] pt-[7px] pl-[33px]">
        <Svg box="0 0 72 92" className="h-[92px] w-[72px]">
          <defs><linearGradient id="sheet" x1="0" y1="0" x2="0" y2="1"><stop offset="0" stopColor="#fff" /><stop offset="1" stopColor="#ececec" /></linearGradient></defs>
          <path d="M1 1h50l20 20v70H1z" fill="url(#sheet)" stroke="#b2b2b2" strokeWidth="1.500" />
          <path d="M54 3v16l16 1z" fill="#fff" stroke="#a6a6a6" />
        </Svg>
        <div className="pl-[31px] leading-[18px] text-[#5a6779]">
          <div className="text-xs leading-[18px] text-black">argentum-web.war</div>
          <div>Arquivo WAR</div>
          <dl className="grid grid-cols-[110px_auto] gap-x-[5px]">
            <dt className="text-right">Data de modificaç...</dt><dd className="text-[#1e395b]">27/04/2017 09:18</dd>
            <dt className="text-right">Tamanho:</dt><dd className="text-[#1e395b]">6,11 MB</dd>
            <dt className="text-right">Data da criação:</dt><dd className="text-[#1e395b]">27/04/2017 09:18</dd>
          </dl>
        </div>
      </footer>
    </div>
  );
}

export default function App() {
  return (
    <div className="grid h-screen grid-cols-2 overflow-hidden bg-white">
      <div className="flex min-h-0 min-w-0 flex-col">
        <BrowserChrome />
        <JenkinsPage />
        <Taskbar />
      </div>
      <Explorer />
    </div>
  );
}
